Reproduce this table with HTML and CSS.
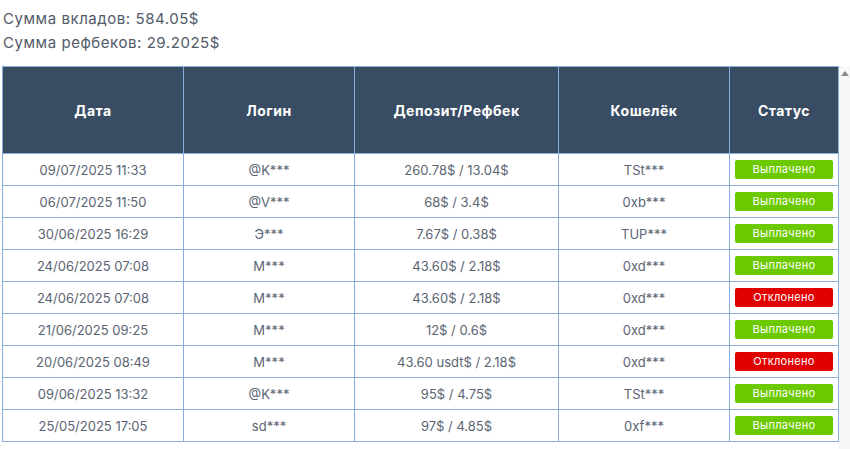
FILE: index.html
```html
<!DOCTYPE html>
<html lang="ru">
<head>
<meta charset="utf-8">
<title>Рефбеки</title>
<link rel="stylesheet" href="styles.css">
</head>
<body>
<div class="totals">
  <div>Сумма вкладов: 584.05$</div>
  <div>Сумма рефбеков: 29.2025$</div>
</div>
<div class="panel">
  <table class="history">
    <colgroup>
      <col class="c-date"><col class="c-login"><col class="c-dep"><col class="c-wallet"><col class="c-status">
    </colgroup>
    <thead>
      <tr><th>Дата</th><th>Логин</th><th>Депозит/Рефбек</th><th>Кошелёк</th><th>Статус</th></tr>
    </thead>
    <tbody>
      <tr><td>09/07/2025 11:33</td><td>@K***</td><td>260.78$ / 13.04$</td><td>TSt***</td><td><span class="badge paid">Выплачено</span></td></tr>
      <tr><td>06/07/2025 11:50</td><td>@V***</td><td>68$ / 3.4$</td><td>0xb***</td><td><span class="badge paid">Выплачено</span></td></tr>
      <tr><td>30/06/2025 16:29</td><td>Э***</td><td>7.67$ / 0.38$</td><td>TUP***</td><td><span class="badge paid">Выплачено</span></td></tr>
      <tr><td>24/06/2025 07:08</td><td>M***</td><td>43.60$ / 2.18$</td><td>0xd***</td><td><span class="badge paid">Выплачено</span></td></tr>
      <tr><td>24/06/2025 07:08</td><td>M***</td><td>43.60$ / 2.18$</td><td>0xd***</td><td><span class="badge rejected">Отклонено</span></td></tr>
      <tr><td>21/06/2025 09:25</td><td>M***</td><td>12$ / 0.6$</td><td>0xd***</td><td><span class="badge paid">Выплачено</span></td></tr>
      <tr><td>20/06/2025 08:49</td><td>M***</td><td>43.60 usdt$ / 2.18$</td><td>0xd***</td><td><span class="badge rejected">Отклонено</span></td></tr>
      <tr><td>09/06/2025 13:32</td><td>@K***</td><td>95$ / 4.75$</td><td>TSt***</td><td><span class="badge paid">Выплачено</span></td></tr>
      <tr><td>25/05/2025 17:05</td><td>sd***</td><td>97$ / 4.85$</td><td>0xf***</td><td><span class="badge paid">Выплачено</span></td></tr>
    </tbody>
  </table>
  <div class="scrollbar"><span class="arrow-up"></span></div>
</div>
</body>
</html>
```
FILE: styles.css
```css
html, body {
  margin: 0;
  padding: 0;
  background: #ffffff;
}
body {
  font-family: Inter, "Open Sans", "DejaVu Sans", sans-serif;
  color: #586171;
}
.totals {
  padding: 7px 0 0 3px;
  font-size: 15px;
  line-height: 24px;
  letter-spacing: 0.55px;
  color: #505a68;
  margin-bottom: 11px;
}
.panel {
  display: flex;
  align-items: stretch;
  padding-left: 2px;
  height: 383px;
}
.history {
  border-collapse: collapse;
  table-layout: fixed;
  width: 836px;
  align-self: flex-start;
}
.c-date { width: 181px; }
.c-login { width: 171px; }
.c-dep { width: 204px; }
.c-wallet { width: 171px; }
.c-status { width: 109px; }
.history th,
.history td {
  border: 1px solid #8aaedb;
  text-align: center;
  padding: 0;
}
.history th {
  background: #384d63;
  color: #ffffff;
  font-weight: 700;
  font-size: 14px;
  letter-spacing: 0.5px;
  height: 86px;
}
.history td {
  height: 31px;
  font-size: 13px;
  color: #5b6473;
}
.badge {
  display: block;
  margin: 0 5px 0 5px;
  height: 19px;
  line-height: 19px;
  border-radius: 2px;
  color: #ffffff;
  font-size: 11px;
  letter-spacing: 0.3px;
}
.paid { background: #6cc900; }
.rejected { background: #e00000; }
.scrollbar {
  width: 12px;
  background: #f8f8f8;
  display: flex;
  justify-content: center;
  padding-top: 5px;
  box-sizing: border-box;
}
.arrow-up {
  width: 0;
  height: 0;
  border-left: 4px solid transparent;
  border-right: 4px solid transparent;
  border-bottom: 5px solid #8c8c8c;
}
```
